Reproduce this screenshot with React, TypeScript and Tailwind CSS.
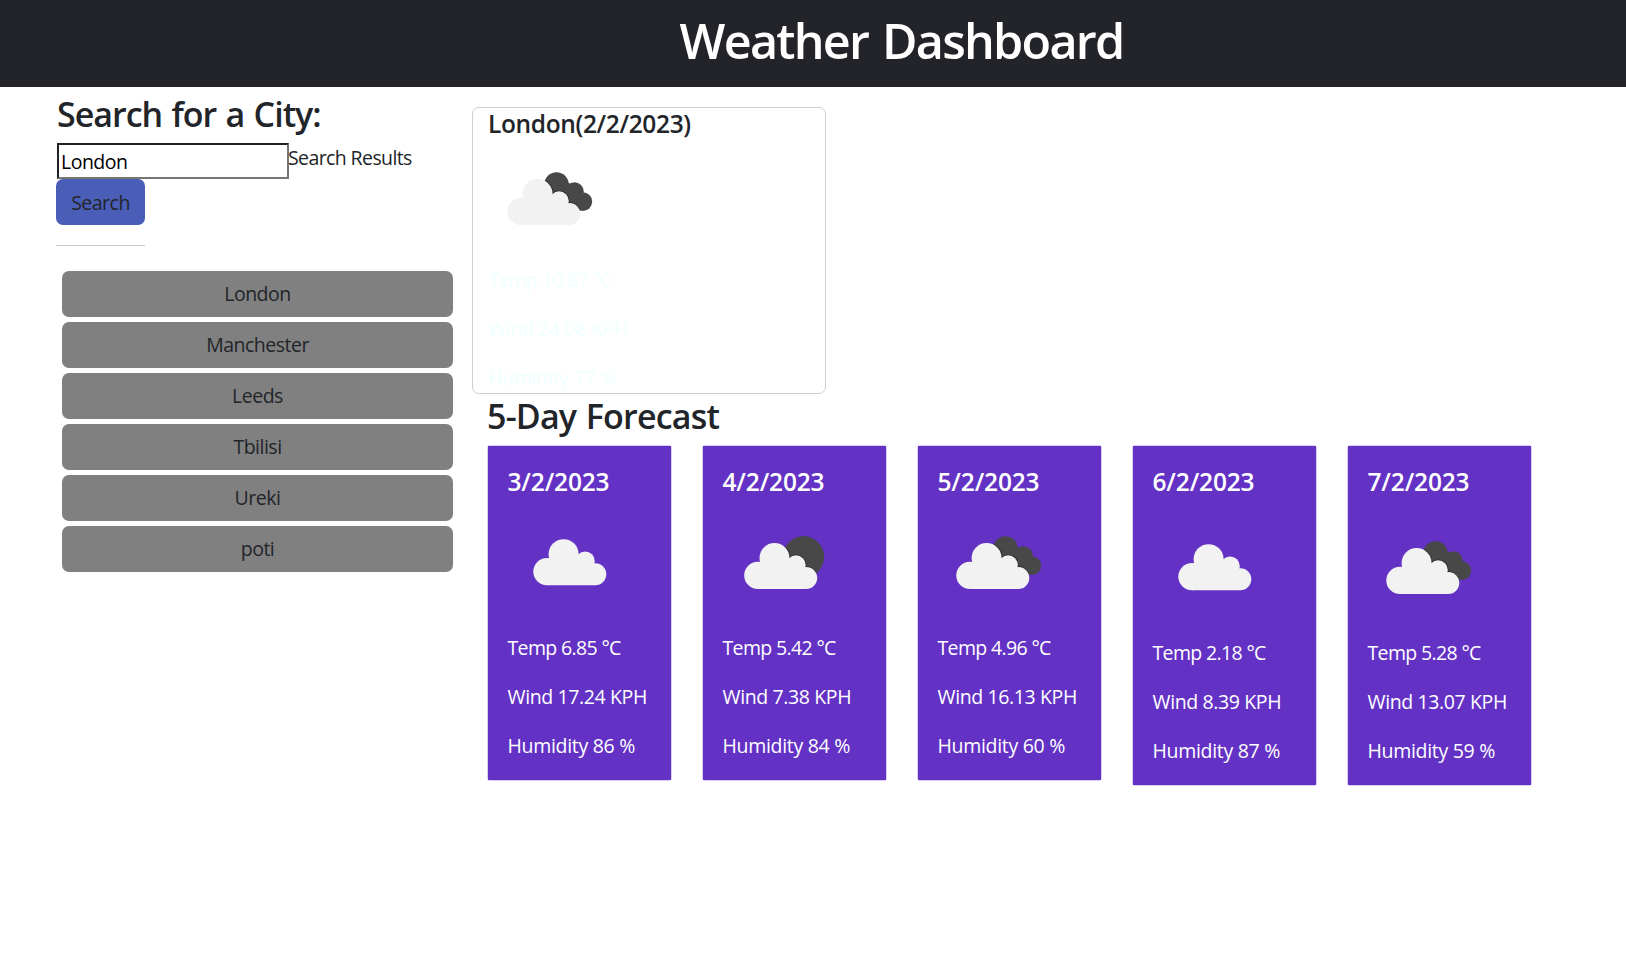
import { useId } from "react";

type Sky = "clouds" | "few" | "broken";

interface Day {
  date: string;
  sky: Sky;
  temp: string;
  wind: string;
  humidity: string;
  tall?: boolean;
}

const cities = ["London", "Manchester", "Leeds", "Tbilisi", "Ureki", "poti"];

const days: Day[] = [
  { date: "3/2/2023", sky: "clouds", temp: "6.85", wind: "17.24", humidity: "86" },
  { date: "4/2/2023", sky: "few", temp: "5.42", wind: "7.38", humidity: "84" },
  { date: "5/2/2023", sky: "broken", temp: "4.96", wind: "16.13", humidity: "60" },
  { date: "6/2/2023", sky: "clouds", temp: "2.18", wind: "8.39", humidity: "87", tall: true },
  { date: "7/2/2023", sky: "broken", temp: "5.28", wind: "13.07", humidity: "59", tall: true },
];

function CloudShape() {
  return (
    <>
      <circle cx="13.6" cy="32.4" r="13.6" />
      <circle cx="30.3" cy="15" r="15" />
      <circle cx="51.8" cy="22" r="9.7" />
      <circle cx="62" cy="35" r="11" />
      <path d="M13.6 46V19h2L30 12l14 4 8 6 10 10v14z" />
    </>
  );
}

function SkyIcon({ sky }: { sky: Sky }) {
  const clipId = useId();
  const place = { clouds: "translate(26.3 39.2)", few: "translate(22.2 43)", broken: "translate(19.3 43)" }[sky];
  const back = {
    clouds: null,
    few: <circle cx="81.5" cy="56.8" r="20.7" />,
    broken: (
      <>
        <circle cx="68.5" cy="48.4" r="12.2" />
        <circle cx="86.5" cy="55.5" r="9.2" />
        <circle cx="94.8" cy="65.6" r="9.4" />
        <path d="M62 52L78 46l10 4 8 10v13h-9L62 64z" />
      </>
    ),
  }[sky];
  return (
    <svg className="-ml-px block h-[125px] w-[125px] shrink-0" viewBox="0 0 125 125">
      {back && (
        <>
          <clipPath id={clipId}>{back}</clipPath>
          <g fill="#484848">{back}</g>
          <g clipPath={`url(#${clipId})`}>
            <g transform={place} fill="#2c2c2c" stroke="#2c2c2c" strokeWidth="1.6">
              <CloudShape />
            </g>
          </g>
        </>
      )}
      <g transform={place} fill="#f2f2f2">
        <CloudShape />
      </g>
    </svg>
  );
}

function Readings({ temp, wind, humidity }: { temp: string; wind: string; humidity: string }) {
  return (
    <div className="flex flex-col gap-[19px] text-[19.5px] leading-[30px] whitespace-nowrap">
      <p className="tracking-[-0.65px]">Temp {temp} °C</p>
      <p className="tracking-[-0.38px]">Wind {wind} KPH</p>
      <p className="tracking-[-0.3px]">Humidity {humidity} %</p>
    </div>
  );
}

function ForecastCard({ day }: { day: Day }) {
  return (
    <article className="w-[185px] rounded-[3px] border border-[#d9cdf2]">
      <div className="bg-[#6332c5] pt-[23px] pr-[18px] pb-[19px] pl-[19.5px] text-white">
        <h4 className="text-[24.5px] leading-[26px] font-semibold tracking-[-0.15px]">{day.date}</h4>
        <div className={day.tall ? "mt-2.5 mb-2" : "mt-[5px] mb-2"}>
          <SkyIcon sky={day.sky} />
        </div>
        <Readings temp={day.temp} wind={day.wind} humidity={day.humidity} />
      </div>
    </article>
  );
}

export default function App() {
  return (
    <div className="min-h-[965px] bg-white font-['Open_Sans',sans-serif] text-[19.5px] leading-[30px] tracking-[-0.5px] text-[#212529]">
      <header className="flex h-[87px] justify-center bg-[#232429] pt-[9.5px] pl-[177px]">
        <h1 className="text-[48.5px] leading-[60px] font-semibold tracking-[-1.75px] text-white [word-spacing:3px]">
          Weather Dashboard
        </h1>
      </header>
      <main className="flex">
        <aside className="w-[472px] pt-1.5 pl-14">
          <h3 className="ml-px text-[34px] leading-[42px] font-semibold tracking-[-1px] [word-spacing:1.5px]">
            Search for a City:
          </h3>
          <div className="mt-2 ml-px flex h-9">
            <input
              defaultValue="London"
              className="h-9 w-[232px] border-2 border-t-[#222] border-r-[#767676] border-b-[#767676] border-l-[#222] bg-white pl-0.5 text-black outline-none"
            />
            <span className="-ml-px tracking-[-0.6px] whitespace-nowrap">Search Results</span>
          </div>
          <button className="flex h-[46px] w-[89px] items-center justify-center rounded-[7px] bg-[#4a5eb8] pt-0.5">
            Search
          </button>
          <hr className="mt-5 w-[89px] border-[#c8c9ca]" />
          <ul className="mt-[25px] ml-1.5 flex w-[391px] flex-col gap-[5px]">
            {cities.map((city) => (
              <li key={city}>
                <button className="flex h-[46px] w-full items-center justify-center rounded-[7px] bg-[#808080]">
                  {city}
                </button>
              </li>
            ))}
          </ul>
        </aside>
        <section>
          <div className="mt-5 h-[287px] w-[354px] rounded-[7px] border border-[#cfcfcf] pt-[3px] pl-[15px]">
            <h4 className="text-[24.5px] leading-[26px] font-semibold tracking-[-0.35px]">London(2/2/2023)</h4>
            <div className="-mt-px ml-px">
              <SkyIcon sky="broken" />
            </div>
            <div className="mt-1 text-[#f0ffff]">
              <Readings temp="10.87" wind="24.08" humidity="77" />
            </div>
          </div>
          <h3 className="ml-[15px] pt-px text-[34px] leading-[42px] font-semibold tracking-[-0.8px] [word-spacing:1.5px]">
            5-Day Forecast
          </h3>
          <div className="mt-2 ml-[15px] flex items-start gap-[30px]">
            {days.map((day) => (
              <ForecastCard key={day.date} day={day} />
            ))}
          </div>
        </section>
      </main>
    </div>
  );
}
